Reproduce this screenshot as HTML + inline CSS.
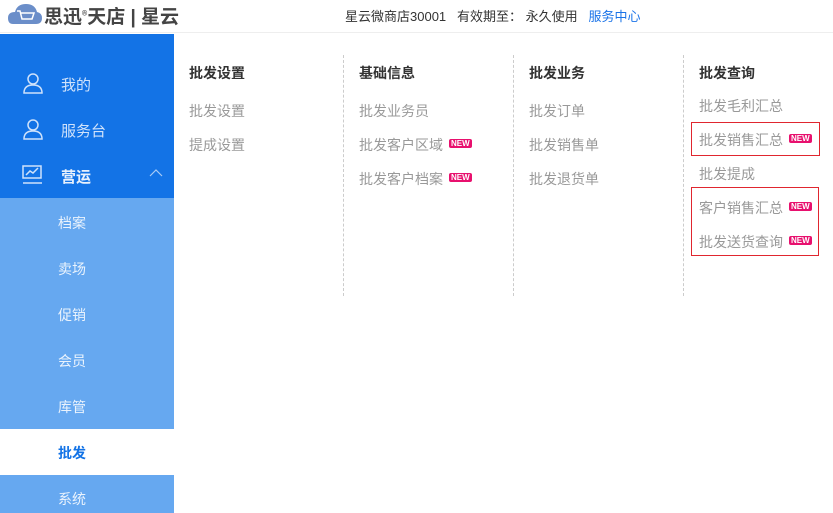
<!DOCTYPE html>
<html><head><meta charset="utf-8"><style>
*{margin:0;padding:0;box-sizing:border-box}
body{width:833px;height:513px;overflow:hidden;background:#fff;font-family:"Liberation Sans","Noto Sans CJK SC",sans-serif;position:relative}
.hdr{position:absolute;left:0;top:0;width:833px;height:33px;border-bottom:1px solid #eee;background:#fff}
.logo{position:absolute;left:8px;top:2px;font-size:19px;font-weight:bold;color:#444;letter-spacing:0}
.hinfo{position:absolute;left:345px;top:6px;font-size:13px;color:#333}
.hinfo span{color:#1a73e8}
.side{position:absolute;left:0;top:34px;width:174px;height:164px;background:#1373e6}
.sub{position:absolute;left:0;top:198px;width:174px;height:315px;background:#66a8f0}
.mi{position:absolute;left:61px;font-size:15px;color:#cfe2fb}
.si{position:absolute;left:58px;font-size:14px;color:#eaf3fd}
.sel{position:absolute;left:0;top:429px;width:174px;height:46px;background:#fff}
.t{position:absolute;font-size:14px;color:#999}
.h{position:absolute;font-size:14px;color:#333;font-weight:bold}
.dash{position:absolute;top:55px;height:241px;border-left:1px dashed #ccc}
.new{display:inline-block;background:#e8106e;color:#fff;font-size:8px;font-weight:bold;line-height:9px;padding:0 2px;border-radius:2px;margin-left:6px;vertical-align:4px}
.box{position:absolute;border:1px solid #e0262f}
</style></head><body>
<div class="hdr">
<svg style="position:absolute;left:8px;top:3px" width="34" height="22"><path d="M5 21 Q0 21 0 15 Q0 9 7 9 Q9 1 18 1 Q27 1 29 9 Q34 10 34 15 Q34 21 28 21Z" fill="#6b8ec9"/><path d="M9 8h3l2 8h10l2-6h-13" stroke="#fff" stroke-width="1.5" fill="none"/></svg>
<div class="logo" style="left:44px">思迅<sup style="font-size:7px">®</sup>天店 | 星云</div>
<div class="hinfo">星云微商店30001 &nbsp; 有效期至： 永久使用 &nbsp; <span>服务中心</span></div>
</div>
<div class="side"></div>
<div class="sub"></div>
<div class="sel"></div>
<svg style="position:absolute;left:22px;top:72px" width="22" height="22" fill="none" stroke="#cfe2fb" stroke-width="1.5"><circle cx="11" cy="7" r="5"/><path d="M2 21q0-8 9-8t9 8z"/></svg>
<svg style="position:absolute;left:22px;top:118px" width="22" height="22" fill="none" stroke="#cfe2fb" stroke-width="1.5"><circle cx="11" cy="7" r="5"/><path d="M2 21q0-8 9-8t9 8z"/></svg>
<svg style="position:absolute;left:22px;top:165px" width="22" height="20" fill="none" stroke="#cfe2fb" stroke-width="1.5"><rect x="1" y="1" width="18" height="12"/><path d="M4 10l4-4 3 2 5-5M1 18h19"/></svg>
<div class="mi" style="top:74px">我的</div>
<div class="mi" style="top:120px">服务台</div>
<div class="mi" style="top:166px;color:#e8f1fd;font-weight:bold">营运</div>
<svg style="position:absolute;left:149px;top:169px" width="14" height="8" fill="none" stroke="#a9cbf5" stroke-width="1.2"><path d="M1 7l6-6 6 6"/></svg>
<div class="si" style="top:213px">档案</div>
<div class="si" style="top:259px">卖场</div>
<div class="si" style="top:305px">促销</div>
<div class="si" style="top:351px">会员</div>
<div class="si" style="top:397px">库管</div>
<div class="si" style="top:443px;color:#1373e6;font-weight:bold">批发</div>
<div class="si" style="top:489px">系统</div>
<div class="dash" style="left:343px"></div><div class="dash" style="left:513px"></div><div class="dash" style="left:683px"></div>
<div class="h" style="left:189px;top:63px">批发设置</div>
<div class="t" style="left:189px;top:101px">批发设置</div>
<div class="t" style="left:189px;top:135px">提成设置</div>
<div class="h" style="left:359px;top:63px">基础信息</div>
<div class="t" style="left:359px;top:101px">批发业务员</div>
<div class="t" style="left:359px;top:135px">批发客户区域<span class="new">NEW</span></div>
<div class="t" style="left:359px;top:169px">批发客户档案<span class="new">NEW</span></div>
<div class="h" style="left:529px;top:63px">批发业务</div>
<div class="t" style="left:529px;top:101px">批发订单</div>
<div class="t" style="left:529px;top:135px">批发销售单</div>
<div class="t" style="left:529px;top:169px">批发退货单</div>
<div class="h" style="left:699px;top:63px">批发查询</div>
<div class="t" style="left:699px;top:96px">批发毛利汇总</div>
<div class="t" style="left:699px;top:130px">批发销售汇总<span class="new">NEW</span></div>
<div class="t" style="left:699px;top:164px">批发提成</div>
<div class="t" style="left:699px;top:198px">客户销售汇总<span class="new">NEW</span></div>
<div class="t" style="left:699px;top:232px">批发送货查询<span class="new">NEW</span></div>
<div class="box" style="left:691px;top:122px;width:129px;height:34px"></div>
<div class="box" style="left:691px;top:187px;width:128px;height:69px"></div>
</body></html>
